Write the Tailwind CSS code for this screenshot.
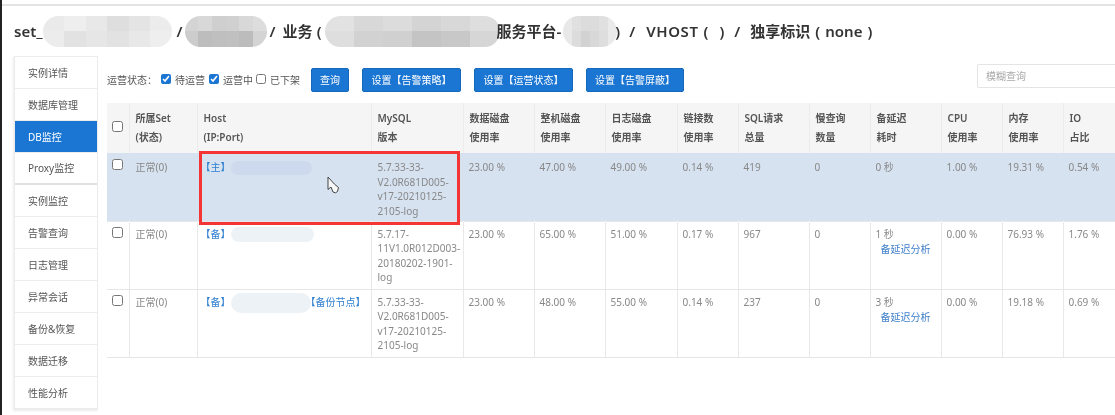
<!DOCTYPE html>
<html lang="en">
<head>
  <meta charset="UTF-8">
  <title>DB监控</title>
  <script src="https://cdn.jsdelivr.net/npm/@tailwindcss/browser@4"></script>
</head>
<body class="bg-white [font-family:'Noto_Sans','Noto_Sans_CJK_SC',sans-serif]">
  <div class="relative w-[1115px] h-[415px] overflow-hidden border-l-2 border-[#222] blur-[0.45px]">
    <div class="mt-[4px] h-[2px] bg-[#e4e4e4]"></div>

    <!-- title, masked parts are the mosaic pills -->
    <h1 id="title" class="mt-[9px] pl-[12px] h-[32px] flex items-center whitespace-nowrap text-[15px] font-semibold text-[#333]"></h1>

    <div class="mt-[9px] flex items-start">
      <nav id="side" class="ml-[12px] w-[84px] shrink-0 border border-[#ececec] shadow-[-1px_1px_2px_rgba(0,0,0,0.08)] text-[10px] text-[#555]"></nav>

      <div class="ml-[9px] w-[1017px] shrink-0">
        <div class="h-[47px] flex items-start text-[10px] text-[#555]">
          <div class="mt-[12px] h-[24px] flex items-center">
            <span class="w-[54px]">运营状态：</span>
            <input type="checkbox" checked class="-mt-[2px] w-[10px] h-[10px] m-0 accent-[#1b76d3]">
            <span class="ml-[4px] w-[34px]">待运营</span>
            <input type="checkbox" checked class="-mt-[2px] w-[10px] h-[10px] m-0 accent-[#1b76d3]">
            <span class="ml-[4px] w-[33px]">运营中</span>
            <input type="checkbox" class="-mt-[3px] w-[10px] h-[10px] m-0">
            <span class="ml-[4px] w-[30px]">已下架</span>
            <button class="ml-[11px] w-[38px] h-[24px] rounded-[2px] bg-[#1b76d3] text-white border border-[#1668bd]">查询</button>
            <button class="ml-[13px] w-[99px] h-[24px] rounded-[2px] bg-[#1b76d3] text-white border border-[#1668bd]">设置【告警策略】</button>
            <button class="ml-[13px] w-[99px] h-[24px] rounded-[2px] bg-[#1b76d3] text-white border border-[#1668bd]">设置【运营状态】</button>
            <button class="ml-[13px] w-[98px] h-[24px] rounded-[2px] bg-[#1b76d3] text-white border border-[#1668bd]">设置【告警屏蔽】</button>
          </div>
          <input placeholder="模糊查询" class="ml-auto mt-[8px] w-[147px] h-[24px] px-[8px] rounded-[2px] border border-[#e4e4e4] outline-none placeholder-[#aaa]">
        </div>

        <table class="table-fixed w-[1017px] border-collapse text-[10px]">
          <colgroup>
            <col class="w-[22px]"><col class="w-[68px]"><col class="w-[174px]"><col class="w-[92px]"><col class="w-[71px]"><col class="w-[71px]"><col class="w-[72px]"><col class="w-[61px]"><col class="w-[71px]"><col class="w-[61px]"><col class="w-[71px]"><col class="w-[61px]"><col class="w-[61px]"><col class="w-[61px]">
          </colgroup>
          <thead id="head" class="bg-[#f5f5f5] text-[#555] font-semibold"></thead>
          <tbody id="body" class="text-[#888] leading-[14.5px]"></tbody>
        </table>
      </div>
    </div>

    <!-- red annotation box and mouse cursor from the capture -->
    <div class="absolute left-[197px] top-[151px] w-[261px] h-[74px] border-[3px] border-[#f43535]"></div>
    <svg class="absolute left-[325px] top-[176px]" width="13" height="18" viewBox="0 0 13 18">
      <path d="M1 1 L1 13.5 L4 11 L6 16 L8.5 16.8 L10.5 15.5 L11.5 11.5 L7.5 8.2 Z" fill="#f4f6f8" stroke="#444" stroke-width="1" stroke-linejoin="round"/>
    </svg>
  </div>

  <script>
    // pill made of mosaic cells, sized by the caller
    function pill(size, cells) {
      return `<span class="inline-grid grid-cols-6 grid-rows-2 overflow-hidden rounded-full shrink-0 ${size}">` +
        cells.map(c => `<i style="background:${c}"></i>`).join('') + `</span>`
    }

    const t1 = ['#eaeaea','#eeeeee','#e8e8e8','#dedede','#e4e4e4','#ececec','#ececec','#e2e2e2','#e6e6e6','#e2e2e2','#e8e8e8','#eeeeee']
    const t2 = ['#d4d4d4','#d8d8d8','#cfcfcf','#d0d0d0','#d8d8d8','#dddddd','#cccccc','#bdbdbd','#bfbfbf','#c0c0c0','#bcbcbc','#d4d4d4']
    const t3 = ['#e2e2e2','#d8d8d8','#dcdcdc','#d4d4d4','#d8d8d8','#dedede','#dedede','#d2d2d2','#d0d0d0','#c4c4c4','#c8c8c8','#d6d6d6']
    const t4 = ['#e8e8e8','#e0e0e0','#dcdcdc','#dcdcdc','#e0e0e0','#eaeaea','#e8e8e8','#dcdcdc','#d2d2d2','#d8d8d8','#dedede','#eaeaea']

    document.getElementById('title').innerHTML =
      `<span>set_</span>` + pill('w-[129px] h-[31px]', t1) +
      `<span class="ml-[5px]">/</span><span class="ml-[2px]"></span>` + pill('w-[82px] h-[31px]', t2) +
      `<span class="ml-[3px]">/</span><span class="ml-[7px]">业务</span><span class="ml-[4px]">(</span>` + pill('w-[175px] h-[31px] ml-[3px]', t3) +
      `<span class="-ml-[3px]">服务平台-</span>` + pill('w-[54px] h-[31px] ml-[2px]', t4) +
      `<span class="-ml-[2px]">)</span><span class="ml-[9px]">/</span><span class="ml-[11px] tracking-[0.6px]">VHOST</span><span class="ml-[5px]">(</span><span class="ml-[11px]">)</span><span class="ml-[10px]">/</span><span class="ml-[10px]">独享标识</span><span class="ml-[5px]">(</span><span class="ml-[5px]">none</span><span class="ml-[5px]">)</span>`

    const nav = ['实例详情','数据库管理','DB监控','Proxy监控','实例监控','告警查询','日志管理','异常会话','备份&恢复','数据迁移','性能分析']
    document.getElementById('side').innerHTML = nav.map((n, i) => {
      const on = n === 'DB监控'
      const edge = i === 3 ? 'border-b-2 border-[#e2e2e2]' : 'border-b border-[#ececec]'
      return `<a class="flex items-center h-[32px] pt-[1px] pl-[13px] ${edge} ${on ? 'bg-[#1b76d3] text-white' : ''}">${n}</a>`
    }).join('')

    const heads = [['所属Set','(状态)'],['Host','(IP:Port)'],['MySQL','版本'],['数据磁盘','使用率'],['整机磁盘','使用率'],['日志磁盘','使用率'],['链接数','使用率'],['SQL请求','总量'],['慢查询','数量'],['备延迟','耗时'],['CPU','使用率'],['内存','使用率'],['IO','占比']]
    document.getElementById('head').innerHTML = `<tr class="h-[50px]">
      <th class="border-r border-[#ececec] text-center align-middle"><input type="checkbox" class="w-[11px] h-[11px] m-0"></th>` +
      heads.map(h => `<th class="px-[6px] text-left font-semibold leading-[19.5px] border-r border-[#ececec]">${h[0]}<br>${h[1]}</th>`).join('') + `</tr>`

    const rows = [
      { tag: '【主】', blob: 'w-[81px] h-[14px] -my-[2px] bg-[#cddaee]', ver: '5.7.33-33-<br>V2.0R681D005-<br>v17-20210125-<br>2105-log', vals: ['23.00 %','47.00 %','49.00 %','0.14 %','419','0','0 秒','1.00 %','19.31 %','0.54 %'], on: true },
      { tag: '【备】', blob: 'w-[83px] h-[15px] -my-[2px] bg-[#edf2f7]', ver: '5.7.17-<br>11V1.0R012D003-<br>20180202-1901-<br>log', vals: ['23.00 %','65.00 %','51.00 %','0.17 %','967','0','1 秒','0.00 %','76.93 %','1.76 %'] },
      { tag: '【备】', blob: 'w-[80px] h-[20px] -my-[3px] -mr-[5px] bg-[#edf2f7]', extra: '【备份节点】', ver: '5.7.33-33-<br>V2.0R681D005-<br>v17-20210125-<br>2105-log', vals: ['23.00 %','48.00 %','55.00 %','0.14 %','237','0','3 秒','0.00 %','19.18 %','0.69 %'] },
    ]
    document.getElementById('body').innerHTML = rows.map(r => {
      const pad = r.on ? 'pt-[7px]' : 'pt-[5px]'
      const line = r.on ? 'border-transparent' : 'border-[#e8e8e8]'
      return `
      <tr class="align-top border-b border-[#e6e6e6] h-[68px] ${r.on ? 'bg-[#d6e2f0]' : ''}">
        <td class="${r.on ? 'pt-[6px]' : 'pt-[5px]'} text-center border-r ${line}"><input type="checkbox" class="block mx-auto w-[11px] h-[11px] m-0"></td>
        <td class="px-[6px] ${pad} border-r ${line}">正常(0)</td>
        <td class="px-[6px] ${pad} whitespace-nowrap border-r ${line}"><span class="-ml-[3px] text-[#2f7fd1]">${r.tag}</span><span class="relative inline-block align-middle rounded-full ${r.blob}"></span><span class="relative text-[#2f7fd1]">${r.extra || ''}</span></td>
        <td class="px-[6px] ${pad} border-r ${line}">${r.ver}</td>
        ${r.vals.map((v, i) => `<td class="px-[5px] ${pad} border-r ${line}">${v}${!r.on && i === 6 ? '<a class="block mt-[1px] ml-[5px] whitespace-nowrap text-[#3d7ec9]">备延迟分析</a>' : ''}</td>`).join('')}
      </tr>`
    }).join('')
  </script>
</body>
</html>
